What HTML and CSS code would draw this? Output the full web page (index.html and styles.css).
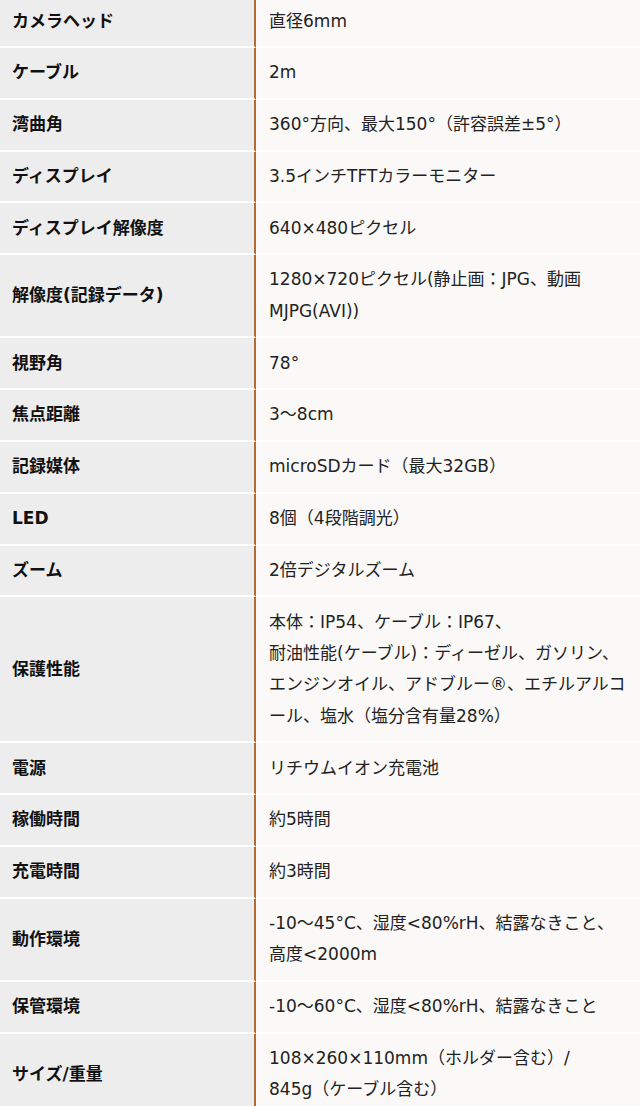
FILE: index.html
```html
<!DOCTYPE html>
<html lang="ja">
<head>
<meta charset="utf-8">
<title>仕様</title>
<link rel="stylesheet" href="styles.css">
</head>
<body>
<table class="spec">
  <tbody>
    <tr><th>カメラヘッド</th><td>直径6mm</td></tr>
    <tr><th>ケーブル</th><td>2m</td></tr>
    <tr><th>湾曲角</th><td>360°方向、最大150°（許容誤差±5°）</td></tr>
    <tr><th>ディスプレイ</th><td>3.5インチTFTカラーモニター</td></tr>
    <tr><th>ディスプレイ解像度</th><td>640×480ピクセル</td></tr>
    <tr><th>解像度(記録データ)</th><td>1280×720ピクセル(静止画：JPG、動画MJPG(AVI))</td></tr>
    <tr><th>視野角</th><td>78°</td></tr>
    <tr><th>焦点距離</th><td>3〜8cm</td></tr>
    <tr><th>記録媒体</th><td>microSDカード（最大32GB）</td></tr>
    <tr><th>LED</th><td>8個（4段階調光）</td></tr>
    <tr><th>ズーム</th><td>2倍デジタルズーム</td></tr>
    <tr><th>保護性能</th><td>本体：IP54、ケーブル：IP67、<br>耐油性能(ケーブル)：ディーゼル、ガソリン、エンジンオイル、アドブルー®、エチルアルコール、塩水（塩分含有量28%）</td></tr>
    <tr><th>電源</th><td>リチウムイオン充電池</td></tr>
    <tr><th>稼働時間</th><td>約5時間</td></tr>
    <tr><th>充電時間</th><td>約3時間</td></tr>
    <tr><th>動作環境</th><td>-10〜45°C、湿度&lt;80%rH、結露なきこと、高度&lt;2000m</td></tr>
    <tr><th>保管環境</th><td>-10〜60°C、湿度&lt;80%rH、結露なきこと</td></tr>
    <tr><th>サイズ/重量</th><td>108×260×110mm（ホルダー含む）/<br>845g（ケーブル含む）</td></tr>
  </tbody>
</table>
</body>
</html>
```

FILE: styles.css
```css
html, body {
  margin: 0;
  padding: 0;
  background: #faf9f8;
}

.spec {
  width: 640px;
  margin-top: -3.7px;
  border-collapse: separate;
  border-spacing: 0;
  table-layout: fixed;
  font-family: "DejaVu Sans", "Noto Sans CJK JP", sans-serif;
  font-size: 17px;
  line-height: 31.4px;
  color: #222;
}

.spec th,
.spec td {
  border-bottom: 2px solid #ffffff;
  vertical-align: middle;
  text-align: left;
}

.spec th {
  width: 242px;
  padding: 9.2px 0 9.2px 12px;
  background: #ededed;
  border-right: 2px solid #b26c33;
  font-weight: bold;
  color: #111;
}

.spec td {
  padding: 9.2px 12px 9.2px 13px;
  background: #faf9f8;
  font-weight: normal;
}
```
